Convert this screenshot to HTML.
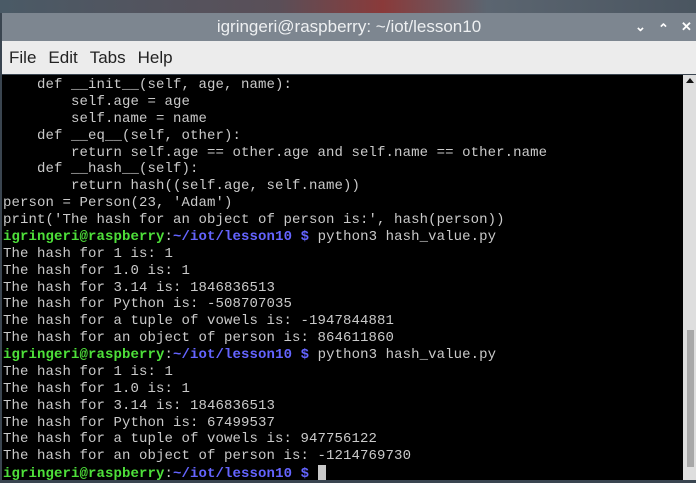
<!DOCTYPE html>
<html><head><meta charset="utf-8"><style>
html,body{margin:0;padding:0;width:696px;height:480px;overflow:hidden;background:#3a4550;}
.desk{position:absolute;left:0;top:0;width:696px;height:13px;background:linear-gradient(90deg,#4a5a66,#5a4f58 40%,#8a3a3a 55%,#5b6570 70%,#4a5560);}
.title{position:absolute;left:2px;top:13px;width:694px;height:28px;background:#7d8690;color:#eef0f2;font:17px "Liberation Sans",sans-serif;text-align:center;line-height:28px;}
.ctl{position:absolute;top:0;color:#fff;font-size:13px;font-weight:bold;}
.menu{position:absolute;left:2px;top:41px;width:694px;height:33px;background:#ececec;font:17px "Liberation Sans",sans-serif;color:#222;line-height:33px;}
.menu span{margin-left:7px;margin-right:5px;}
.term{position:absolute;left:2px;top:75px;width:681px;height:405px;background:#000;}
pre{margin:0;position:absolute;left:1px;top:2px;font:14px/16.87px "Liberation Mono",monospace;letter-spacing:0.1px;color:#cacaca;}
.g{color:#4ee03a;font-weight:bold}.b{color:#6464ff;font-weight:bold}
.sb{position:absolute;left:683px;top:75px;width:13px;height:405px;background:#dedede;}
.thumb{position:absolute;left:4px;top:255px;width:7px;height:137px;background:#a8a8a8;}
.cur{display:inline-block;width:8px;height:15px;background:#c8c8c8;vertical-align:-3px;}
</style></head><body>
<div class="desk"></div>
<div class="title">igringeri@raspberry: ~/iot/lesson10
<span class="ctl" style="left:633px">&#8964;</span><span class="ctl" style="left:656px;top:2px">&#8963;</span><span class="ctl" style="left:679px">&#10005;</span></div>
<div class="menu"><span>File</span><span>Edit</span><span>Tabs</span><span>Help</span></div>
<div class="term"><pre>    def __init__(self, age, name):
        self.age = age
        self.name = name
    def __eq__(self, other):
        return self.age == other.age and self.name == other.name
    def __hash__(self):
        return hash((self.age, self.name))
person = Person(23, 'Adam')
print('The hash for an object of person is:', hash(person))
<span class="g">igringeri@raspberry</span>:<span class="b">~/iot/lesson10 $</span> python3 hash_value.py
The hash for 1 is: 1
The hash for 1.0 is: 1
The hash for 3.14 is: 1846836513
The hash for Python is: -508707035
The hash for a tuple of vowels is: -1947844881
The hash for an object of person is: 864611860
<span class="g">igringeri@raspberry</span>:<span class="b">~/iot/lesson10 $</span> python3 hash_value.py
The hash for 1 is: 1
The hash for 1.0 is: 1
The hash for 3.14 is: 1846836513
The hash for Python is: 67499537
The hash for a tuple of vowels is: 947756122
The hash for an object of person is: -1214769730
<span class="g">igringeri@raspberry</span>:<span class="b">~/iot/lesson10 $</span> <span class="cur"></span></pre></div>
<div class="sb"><div style="position:absolute;left:3px;top:3px;width:0;height:0;border-left:4px solid transparent;border-right:4px solid transparent;border-bottom:5px solid #111"></div><div class="thumb"></div></div>
</body></html>
